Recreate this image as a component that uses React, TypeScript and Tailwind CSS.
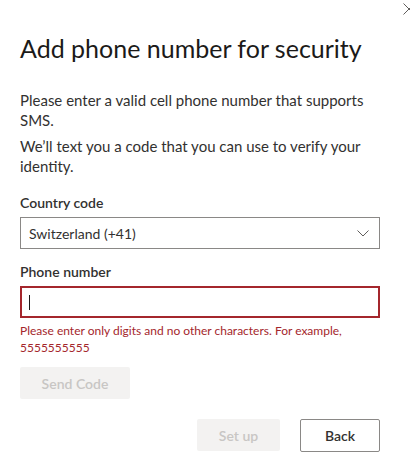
import React from 'react';

const font = { fontFamily: '"Segoe UI", Lato, "Liberation Sans", sans-serif' };

const App: React.FC = () => {
  return (
    <div className="relative w-[410px] h-[468px] bg-white overflow-hidden text-[#323130]" style={font}>
      {/* close button, cut off at the window edge */}
      <button className="absolute left-[403px] top-[3px] w-[12px] h-[12px]" aria-label="Close">
        <svg width="12" height="12" viewBox="0 0 12 12" fill="none" stroke="#605e5c" strokeWidth="1">
          <path d="M0.5 0.5 L11.5 11.5 M11.5 0.5 L0.5 11.5" />
        </svg>
      </button>

      <div className="flex flex-col pl-[20px] pr-[30px] pt-[32px]">
        <h1 className="text-[25px] leading-[32px] font-normal text-[#1b1a19]">Add phone number for security</h1>

        <p className="mt-[26px] text-[15px] leading-[20px]">
          Please enter a valid cell phone number that supports SMS.
        </p>
        <p className="mt-[6px] text-[15px] leading-[20px]">
          We’ll text you a code that you can use to verify your identity.
        </p>

        <label className="mt-[17px] text-[14px] leading-[20px] font-semibold">Country code</label>
        <div className="mt-[4px] h-[32px] border border-[#8a8886] flex items-center justify-between pl-[8px] pr-[10px]">
          <span className="text-[14px]">Switzerland (+41)</span>
          <svg width="12" height="7" viewBox="0 0 12 7" fill="none" stroke="#605e5c" strokeWidth="1">
            <path d="M0.5 0.5 L6 6 L11.5 0.5" />
          </svg>
        </div>

        <label className="mt-[13px] text-[14px] leading-[20px] font-semibold">Phone number</label>
        <div className="mt-[4px] h-[32px] border-2 border-[#a4262c] flex items-center pl-[7px]">
          <span className="w-px h-[15px] bg-[#1b1a19]" />
        </div>
        <p className="mt-[4px] text-[12px] leading-[17px] text-[#a4262c]">
          Please enter only digits and no other characters. For example, 5555555555
        </p>

        <div className="mt-[11px]">
          <button className="w-[110px] h-[32px] bg-[#f3f2f1] rounded-[2px] text-[14px] font-semibold text-[#c8c6c4]">
            Send Code
          </button>
        </div>

        <div className="mt-[20px] flex justify-end gap-[20px]">
          <button className="w-[83px] h-[32px] bg-[#f3f2f1] rounded-[2px] text-[14px] font-semibold text-[#c8c6c4]">
            Set up
          </button>
          <button className="w-[80px] h-[33px] border border-[#8a8886] rounded-[2px] text-[14px] font-semibold text-[#323130] bg-white">
            Back
          </button>
        </div>
      </div>
    </div>
  );
};

export default App;
